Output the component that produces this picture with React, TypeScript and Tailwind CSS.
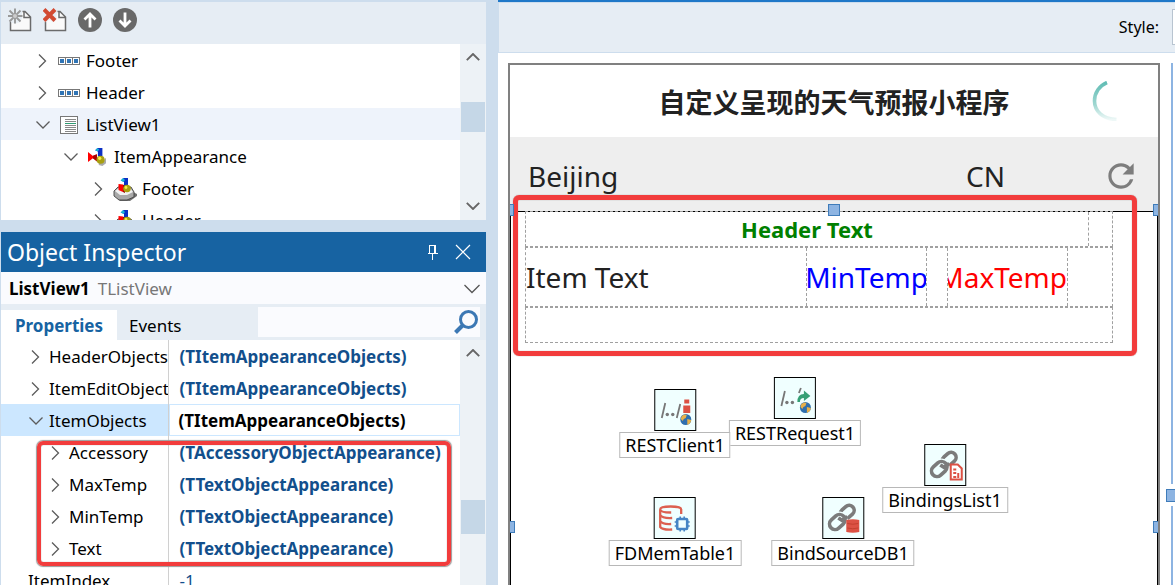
import type { ReactNode } from 'react';
import { MdRefresh } from 'react-icons/md';

interface TreeNode {
  label: string;
  level: number;
  open?: boolean;
  selected?: boolean;
  icon: 'bar' | 'list' | 'shapes' | 'tray';
}

interface PropertyRow {
  name: string;
  value: string;
  level: number;
  expandable?: boolean;
  open?: boolean;
}

const TREE: TreeNode[] = [
  { label: 'Footer', level: 0, icon: 'bar' },
  { label: 'Header', level: 0, icon: 'bar' },
  { label: 'ListView1', level: 0, icon: 'list', open: true, selected: true },
  { label: 'ItemAppearance', level: 1, icon: 'shapes', open: true },
  { label: 'Footer', level: 2, icon: 'tray' },
  { label: 'Header', level: 2, icon: 'tray' },
];

const TREE_INDENT = ['pl-[34px]', 'pl-[62px]', 'pl-[90px]'];

const PROPERTIES: PropertyRow[] = [
  { name: 'HeaderObjects', value: '(TItemAppearanceObjects)', level: 0, expandable: true },
  { name: 'ItemEditObject', value: '(TItemAppearanceObjects)', level: 0, expandable: true },
  { name: 'ItemObjects', value: '(TItemAppearanceObjects)', level: 0, expandable: true, open: true },
  { name: 'Accessory', value: '(TAccessoryObjectAppearance)', level: 1, expandable: true },
  { name: 'MaxTemp', value: '(TTextObjectAppearance)', level: 1, expandable: true },
  { name: 'MinTemp', value: '(TTextObjectAppearance)', level: 1, expandable: true },
  { name: 'Text', value: '(TTextObjectAppearance)', level: 1, expandable: true },
  { name: 'ItemIndex', value: '-1', level: 0 },
];

function Chevron({ open }: { open?: boolean }) {
  return (
    <svg viewBox="0 0 16 16" className="h-4 w-4 shrink-0" fill="none" stroke="#5c5c5c" strokeWidth="1.3">
      <path d={open ? 'M1.5 4.5 8 11l6.5-6.5' : 'M4 1.5 10.5 8 4 14.5'} />
    </svg>
  );
}

function Arrow({ down }: { down?: boolean }) {
  return (
    <svg viewBox="0 0 14 8" className="h-2 w-[14px]" fill="none" stroke="#666" strokeWidth="1.9">
      <path d={down ? 'M.8.8 7 7l6.2-6.2' : 'M.8 7.2 7 1l6.2 6.2'} />
    </svg>
  );
}

function Shapes() {
  return (
    <>
      <path d="M12 16q6 0 7-5l1 1v5l-4 3-4-1z" fill="#888" opacity=".7" />
      <path d="M8 2.5 10.500 0H16v9h-5V4z" fill="#0b2fc4" />
      <path d="M8 2.5 10.500 0l2 2-2 2z" fill="#19b4d8" />
      <path d="M0 4.500v11l5.500-4 4 3V7l-4 2z" fill="#f00" />
      <path d="M5.500 8.500v3L10 15V7z" fill="#a00" />
      <circle cx="14" cy="13" r="4.500" fill="#a9a010" />
      <circle cx="13" cy="11.500" r="1.800" fill="#f4ee45" />
    </>
  );
}

function TreeIcon({ kind }: { kind: TreeNode['icon'] }) {
  if (kind === 'bar') {
    return (
      <svg viewBox="0 0 22 8" className="h-2 w-[22px]" shapeRendering="crispEdges">
        <path d="M0 0h22v8H0z" fill="#777" />
        {[1, 8, 15].map((x) => (
          <g key={x}>
            <rect x={x} y="1" width="6" height="6" fill="#fff" />
            <rect x={x + 1} y="2" width="4" height="4" fill="#2f74b5" />
          </g>
        ))}
      </svg>
    );
  }
  if (kind === 'list') {
    return (
      <svg viewBox="0 0 18 18" className="h-[18px] w-[18px]" shapeRendering="crispEdges">
        <rect x=".5" y=".5" width="17" height="17" fill="#fff" stroke="#777" />
        <path d="M5 3.500h11M5 5.500h11M5 9.500h11M5 11.500h11M5 13.500h11M5 15.500h11" stroke="#888" />
        <path d="M5 7.500h11" stroke="#2f9c74" />
      </svg>
    );
  }
  if (kind === 'shapes') {
    return (
      <svg viewBox="0 0 20 20" className="h-[18px] w-[18px]">
        <Shapes />
      </svg>
    );
  }
  return (
    <svg viewBox="0 0 24 24" className="h-6 w-6 shrink-0">
      <path d="m4 21 3 3h10l7-5v-2l-4-2z" fill="#333" opacity=".7" />
      <path d="m1 14 4-4h13l3 5v5l-7 3H6l-5-4z" fill="#a9a9a9" stroke="#444" strokeWidth=".9" />
      <path d="m2 14 4-3h11l3 4-6 3H7z" fill="#f2f2f2" />
      <path d="M8 3.500 10.500 1H15v9h-4V5z" fill="#0b2fc4" />
      <path d="M7.500 3.500 10 1l2 2-1.500 2z" fill="#19b4d8" />
      <path d="M5.500 7 10 7.500V15l-4.500-2z" fill="#f00" />
      <path d="M10 7.500V15l2 1V9z" fill="#900" />
      <circle cx="14" cy="11.500" r="3.800" fill="#a9a010" />
      <circle cx="13" cy="10.500" r="1.400" fill="#f4ee45" />
    </svg>
  );
}

function PageShape() {
  return (
    <>
      <path d="M2.500 12v10.500h20V9L17 3.500h-3L13 12z" fill="#fafafa" />
      <path d="M2.500 13.500v9h20V9L17 3.500h-2.500M16 4v5.500h6" fill="none" stroke="#6b6b6b" strokeWidth="1.500" />
    </>
  );
}

function StructureToolbar() {
  return (
    <div className="flex h-[42px] gap-[11px] bg-[#e6edf4] pt-[6px] pl-[7px]">
      <button aria-label="New item" className="h-6 w-6">
        <svg viewBox="0 0 24 24" className="h-6 w-6">
          <PageShape />
          <circle cx="7" cy="8" r="7.500" fill="#e6edf4" opacity=".8" />
          <path d="M7 .5v15M-.5 8h15M1.500 2.500l11 11M12.500 2.500l-11 11" stroke="#999" strokeWidth="1.900" />
          <circle cx="7" cy="8" r="2" fill="#ccc" />
        </svg>
      </button>
      <button aria-label="Delete item" className="h-6 w-6">
        <svg viewBox="0 0 24 24" className="h-6 w-6">
          <PageShape />
          <path d="M1 1.500 12 12.500M12 1.500 1 12.500" stroke="#e6edf4" strokeWidth="6" />
          <path d="M1 1.500 12 12.500M12 1.500 1 12.500" stroke="#d24a32" strokeWidth="4" />
        </svg>
      </button>
      <button aria-label="Move up" className="h-6 w-6">
        <svg viewBox="0 0 24 24" className="h-6 w-6" fill="none">
          <circle cx="12" cy="12" r="12" fill="#696969" />
          <path d="M12 19.500V6M6.500 11.500 12 6l5.500 5.500" stroke="#fff" strokeWidth="2.800" />
        </svg>
      </button>
      <button aria-label="Move down" className="h-6 w-6">
        <svg viewBox="0 0 24 24" className="h-6 w-6" fill="none">
          <circle cx="12" cy="12" r="12" fill="#696969" />
          <path d="M12 4.500V18M6.500 12.500 12 18l5.500-5.500" stroke="#fff" strokeWidth="2.800" />
        </svg>
      </button>
    </div>
  );
}

function StructurePanel() {
  return (
    <section aria-label="Structure">
      <StructureToolbar />
      <div className="flex h-[176px]">
        <ul className="min-w-0 flex-1 overflow-hidden bg-white">
          {TREE.map((node, i) => (
            <li
              key={i}
              className={`flex h-8 items-center pt-[2px] ${TREE_INDENT[node.level]} ${node.selected ? 'bg-[#eef3fb]' : ''}`}
            >
              <Chevron open={node.open} />
              <span className="ml-[7px] flex w-[22px] justify-center">
                <TreeIcon kind={node.icon} />
              </span>
              <span className="ml-[6px]">{node.label}</span>
            </li>
          ))}
        </ul>
        <div className="flex w-[26px] flex-col items-center bg-[#edf2f6] pt-[9px] pb-[10px]">
          <Arrow />
          <div className="mt-[41px] h-[30px] w-6 bg-[#c5d7e7]" />
          <div className="mt-auto">
            <Arrow down />
          </div>
        </div>
      </div>
    </section>
  );
}

function PropertyGrid() {
  return (
    <div className="relative flex min-h-0 flex-1 overflow-hidden bg-white">
      <div className="min-w-0 flex-1">
        <table className="w-full table-fixed border-collapse">
          <colgroup>
            <col className="w-[167px]" />
            <col />
          </colgroup>
          <tbody>
            {PROPERTIES.map((row) => (
              <tr key={row.name} className="h-8">
                <th
                  scope="row"
                  className={`border-r border-[#d0d0d0] p-0 text-left font-normal ${row.open ? 'bg-[#cce7ff]' : ''}`}
                >
                  <div
                    className={`flex h-8 items-center gap-[5px] overflow-hidden pt-[2px] whitespace-nowrap ${row.level ? 'pl-[47px]' : 'pl-[27px]'}`}
                  >
                    {row.expandable && <Chevron open={row.open} />}
                    {row.name}
                  </div>
                </th>
                <td className="p-0">
                  <div
                    className={`flex h-8 items-center border pt-[2px] whitespace-nowrap ${
                      row.open ? 'border-[#cce7ff] pl-[9px] font-bold text-black' : 'border-transparent pl-[10px] text-[#124f8c]'
                    } ${row.expandable ? 'font-bold' : ''}`}
                  >
                    {row.value}
                  </div>
                </td>
              </tr>
            ))}
          </tbody>
        </table>
      </div>
      <div className="flex w-[26px] flex-col items-center bg-[#edf2f6] pt-[9px]">
        <Arrow />
        <div className="mt-[143px] h-[34px] w-6 bg-[#c5d7e7]" />
      </div>
      {/* highlight around the item objects */}
      <div className="absolute top-[101px] left-9 h-[125px] w-[414px] rounded-md border-4 border-[#f23c3c] shadow-[0_0_1px_1px_#999,inset_0_0_1px_#777]" />
    </div>
  );
}

function ObjectInspector() {
  return (
    <section aria-label="Object Inspector" className="mt-3 flex min-h-0 flex-1 flex-col">
      <header className="flex h-10 items-center bg-[#1763a2] pr-[15px] pl-[6px] text-white">
        <h2 className="text-[23px]">Object Inspector</h2>
        <button aria-label="Pin" className="ml-auto">
          <svg viewBox="0 0 12 16" className="h-4 w-3" fill="none" stroke="#fff" shapeRendering="crispEdges">
            <path d="M2.500 9V1.500h6V9M7.500 1v8M1 9.500h10M5.500 10v6" />
          </svg>
        </button>
        <button aria-label="Close" className="ml-4">
          <svg viewBox="0 0 16 16" className="h-4 w-4" stroke="#fff" strokeWidth="1.200">
            <path d="m1 1 14 14M15 1 1 15" />
          </svg>
        </button>
      </header>

      <div className="relative flex h-8 items-center gap-2 bg-[#fafbfe] pt-[2px] pr-[6px] pl-2">
        <b>ListView1</b>
        <span className="text-[#777]">TListView</span>
        <svg viewBox="0 0 16 10" className="ml-auto h-[10px] w-4" fill="none" stroke="#555" strokeWidth="1.300">
          <path d="m.5 1 7.500 7.500L15.500 1" />
        </svg>
        <select aria-label="Selected object" className="absolute inset-0 opacity-0">
          <option>ListView1</option>
        </select>
      </div>

      <div className="flex h-9 items-end bg-[#e6edf4] pr-[6px]">
        <button className="h-[30px] w-[116px] bg-white pt-[2px] font-bold text-[#1763a2]">Properties</button>
        <button className="ml-3 h-[30px] pt-[2px]">Events</button>
        <label className="mb-[3px] ml-auto flex h-[30px] w-[222px] items-center bg-[#fafbfe] pr-[2px]">
          <input type="text" aria-label="Search properties" className="min-w-0 flex-1 bg-transparent px-2 outline-none" />
          <svg viewBox="0 0 24 24" className="h-6 w-6" fill="none" stroke="#3c78b4">
            <circle cx="14.500" cy="9.500" r="8" strokeWidth="3" />
            <path d="m8.500 15.500-7 7" strokeWidth="4" />
          </svg>
        </label>
      </div>

      <PropertyGrid />
    </section>
  );
}

function Handle({ className }: { className: string }) {
  return <div className={`absolute h-3 border border-[#3f7cba] bg-[#8db4e2] ${className}`} />;
}

function Globe() {
  return (
    <>
      <circle cx="30.500" cy="29.500" r="5.500" fill="#2f6fae" />
      <path d="M26.500 26q3-2.500 5-1l-1 3-2 1-1 2-2-2zM32 29l4 1-1 3-3 2z" fill="#e8b04a" />
    </>
  );
}

function RestPath() {
  return (
    <>
      <path d="M10 13 6.500 28" stroke="#777" strokeWidth="1.800" />
      <circle cx="12" cy="24.500" r="1.700" fill="#777" />
      <circle cx="17.500" cy="24.500" r="1.700" fill="#777" />
    </>
  );
}

function Links() {
  return (
    <g fill="none" stroke="#7b7b7b" strokeWidth="3.600">
      <rect x="-7.500" y="-5" width="15" height="10" rx="5" transform="translate(24 14) rotate(-42)" />
      <rect x="-8.500" y="-5.500" width="17" height="11" rx="5.500" transform="translate(14 24) rotate(-42)" stroke="#f0ffff" strokeWidth="6" />
      <rect x="-8.500" y="-5.500" width="17" height="11" rx="5.500" transform="translate(14 24) rotate(-42)" />
      <path d="m15 20 4 2.500 5-4" />
    </g>
  );
}

function FormComponent({ label, place, children }: { label: string; place: string; children: ReactNode }) {
  return (
    <div className={`absolute flex -translate-x-1/2 flex-col items-center gap-px text-lg ${place}`}>
      <svg viewBox="0 0 40 40" className="h-[42px] w-[42px] border border-black bg-[#f0ffff]" fill="none">
        {children}
      </svg>
      <span className="flex h-[26px] items-center border border-[#b8b8b8] bg-white px-[5px] whitespace-nowrap">
        {label}
      </span>
    </div>
  );
}

function NonVisualComponents() {
  return (
    <>
      <FormComponent label="RESTRequest1" place="top-[165px] left-[284px]">
        <RestPath />
        <path d="m26 10-2 5" stroke="#777" strokeWidth="1.800" />
        <path d="M22.500 24q0-8 6.500-8v-3.500l6.500 5.500-6.500 5v-3q-4 0-4 4z" fill="#35a075" />
        <Globe />
      </FormComponent>
      <FormComponent label="RESTClient1" place="top-[177px] left-[164px]">
        <RestPath />
        <path d="m25 14-3.500 14" stroke="#777" strokeWidth="1.800" />
        <path d="M29 9.500h5v4h-5zM28 15.500h7V23h-7z" fill="#dc5144" />
        <Globe />
      </FormComponent>
      <FormComponent label="BindingsList1" place="top-[232px] left-[434px]">
        <Links />
        <path d="M25.500 19.500h7l4 4v11h-11z" fill="#fff" stroke="#dc5144" strokeWidth="2" />
        <path d="M28 24.500h3M28 28h3M28 32h3M33 28v5" stroke="#dc5144" strokeWidth="2" />
      </FormComponent>
      <FormComponent label="FDMemTable1" place="top-[285px] left-[164px]">
        <g stroke="#dc6050" strokeWidth="2.300">
          <path d="M26.500 16v-4.500q0-3-10.500-3t-10.500 3q0 3 11 3" />
          <path d="M5.500 12v17q2 3 12 2.500M5.500 17q2 3.500 12 3M5.500 23q2 3.500 11 3" />
        </g>
        <rect x="22.500" y="21" width="10" height="10" rx="1" stroke="#4585c5" strokeWidth="2.600" />
        <path d="M20 24h2m-2 4h2m11-4h2m-2 4h2m-9.500-9.500v2m4-2v2m-4 11v2m4-2v2" stroke="#4585c5" strokeWidth="1.600" />
      </FormComponent>
      <FormComponent label="BindSourceDB1" place="top-[285px] left-[332px]">
        <Links />
        <path d="M23 22q6.500-1.500 13 0v12q-6.500 1.500-13 0z" fill="#dc5144" />
        <path d="M24 25.500q5.500 1.500 11 0M24 30q5.500 1.500 11 0" stroke="#c4402f" />
      </FormComponent>
    </>
  );
}

function ListViewPreview() {
  return (
    <div className="relative flex-1 border border-b-0 border-black bg-white">
      <div className="mr-11 ml-[14px] text-[28px] leading-none text-[#222]">
        <div className="-mt-px flex h-9 border border-dashed border-[#a0a0a0]">
          <div className="flex flex-1 items-center justify-center border-r border-dashed border-[#a0a0a0] pb-px text-[22px] font-bold text-[#008000]">
            Header Text
          </div>
          <div className="w-[23px]" />
        </div>
        <div className="flex h-[60px] border border-dashed border-[#a0a0a0]">
          <div className="flex flex-1 items-center">Item Text</div>
          <div className="flex w-[121px] items-center justify-center overflow-hidden border-x border-dashed border-[#a0a0a0] text-[#00f]">
            MinTemp
          </div>
          <div className="mr-11 ml-5 flex w-[121px] items-center justify-end overflow-hidden border-x border-dashed border-[#a0a0a0] text-[#f00]">
            MaxTemp
          </div>
        </div>
        <div className="h-9 border border-dashed border-[#a0a0a0]" />
      </div>

      <NonVisualComponents />

      {/* highlight around the item */}
      <div className="absolute -top-[17px] right-[20px] left-[2px] h-[161px] rounded-md border-[5px] border-[#f23c3c] shadow-[0_0_1px_#777,inset_0_0_1px_#777]" />
      <Handle className="-top-2 -left-px w-1 border-l-0" />
      <Handle className="-top-2 left-1/2 w-3 -translate-x-1/2" />
      <Handle className="-top-2 -right-px w-[5px] border-r-0" />
      <Handle className="top-[309px] -left-px w-[5px] border-l-0" />
      <Handle className="top-[309px] -right-px w-[5px] border-r-0" />
    </div>
  );
}

function FormDesigner() {
  return (
    <main className="flex min-w-0 flex-1 flex-col border-t-2 border-[#1f78c8] bg-white">
      <div className="flex h-[51px] items-center overflow-hidden border border-r-0 border-[#cddded] bg-[#e6edf4] pb-[2px]">
        <label htmlFor="style" className="ml-auto text-base">
          Style:
        </label>
        <select id="style" className="-mr-[157px] ml-[13px] h-9 w-40 shrink-0 border border-[#b8c4d0] bg-white" />
      </div>

      <div className="flex min-h-0 flex-1 pt-[10px] pl-[10px]">
        <div className="flex min-w-0 flex-1 flex-col overflow-hidden border-2 border-b-0 border-[#808080]">
          <div className="grid h-18 shrink-0 grid-cols-[1fr_auto_1fr] items-center">
            <h1 className="col-start-2 font-['Noto_Sans_CJK_SC',sans-serif] text-[27px] leading-none font-bold text-[#222]">
              自定义呈现的天气预报小程序
            </h1>
            <svg viewBox="0 0 26 40" className="mr-10 h-10 w-[26px] justify-self-end" fill="none">
              <defs>
                <linearGradient id="spin" x1="0" y1="0" x2="0" y2="1">
                  <stop offset="0" stopColor="#62bdb5" />
                  <stop offset=".6" stopColor="#9fd7d1" />
                  <stop offset="1" stopColor="#eef8f7" />
                </linearGradient>
              </defs>
              <path d="M15 1.500A20 20 0 0 0 2.500 20c0 10 8 18 22 18.500" stroke="url(#spin)" strokeWidth="3.600" />
            </svg>
          </div>
          <div className="flex h-[74px] shrink-0 items-center bg-[#eee] pt-1 pr-[18px] pl-[18px] text-[28px] text-[#222]">
            <span>Beijing</span>
            <span className="mr-[97px] ml-auto">CN</span>
            <button aria-label="Refresh" className="text-[#7d7d7d]">
              <MdRefresh size={38} />
            </button>
          </div>
          <ListViewPreview />
        </div>

        <div className="relative ml-[11px] flex w-1 flex-col">
          <div className="h-[421px] w-[2px] bg-[#8db4e2]" />
          <div className="mt-[22px] w-[2px] flex-1 bg-[#8db4e2]" />
          <div className="absolute top-[426px] -left-[5px] h-[13px] w-[13px] border border-[#3f7cba] bg-[#8db4e2]" />
        </div>
      </div>
    </main>
  );
}

export default function App() {
  return (
    <div className="flex h-screen gap-3 overflow-hidden bg-[#cddded] font-['Noto_Sans','Noto_Sans_CJK_SC',sans-serif] text-[17px] text-black">
      <aside className="flex w-[486px] shrink-0 flex-col pt-[2px] pl-px">
        <StructurePanel />
        <ObjectInspector />
      </aside>
      <FormDesigner />
    </div>
  );
}
